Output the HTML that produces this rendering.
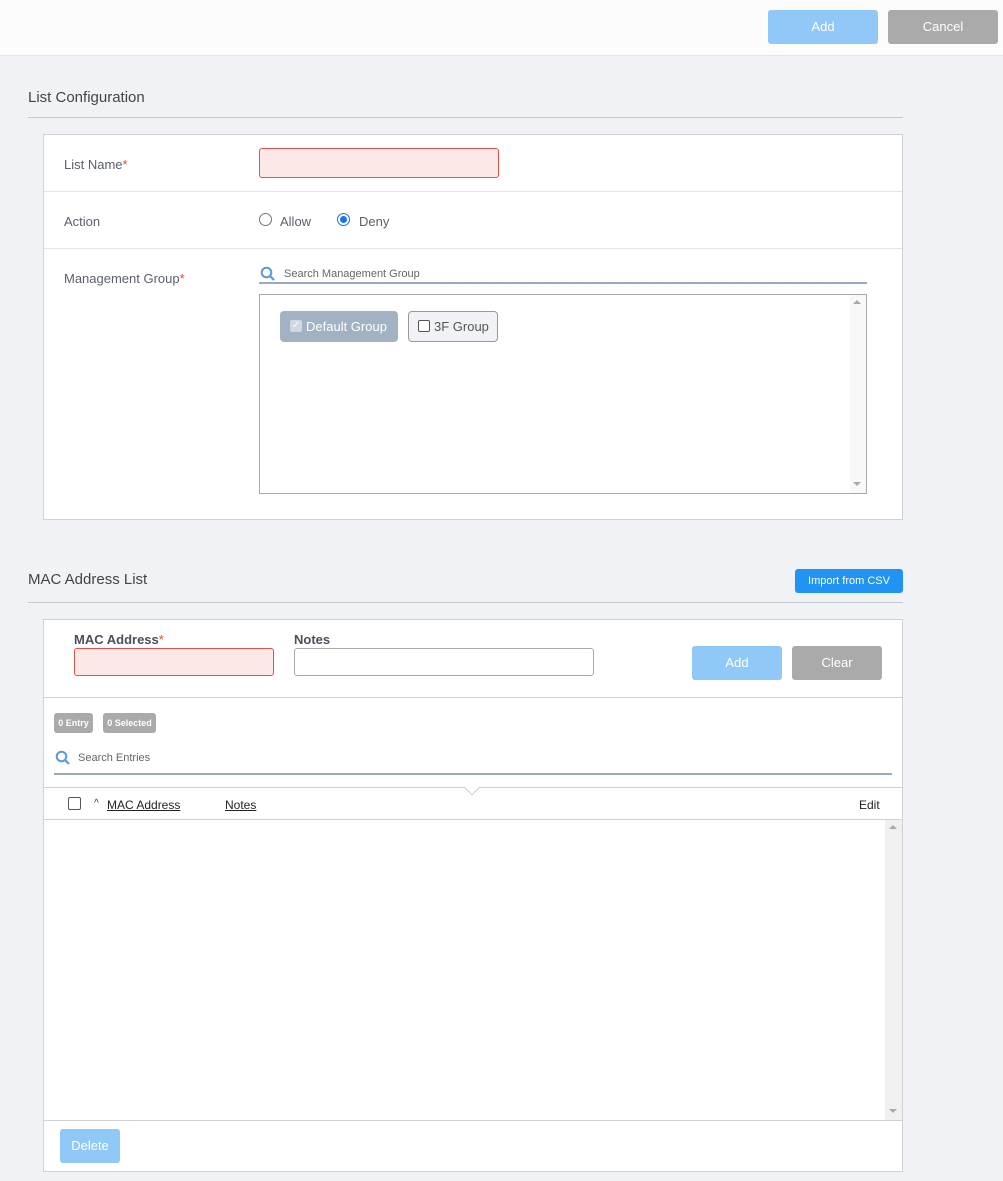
<!DOCTYPE html>
<html><head><style>
*{box-sizing:border-box;margin:0;padding:0}
body{width:1003px;height:1181px;background:#f1f2f6;font-family:"Liberation Sans",sans-serif;position:relative;overflow:hidden;color:#555}
.a{position:absolute}
.btn{position:absolute;color:#fff;font-size:13px;text-align:center;border-radius:3px}
.lbl{position:absolute;font-size:13px;color:#5a5f6b}
.req{color:#e0463a}
.line{position:absolute;height:1px;background:#e2e4e8}
</style></head><body>
<div class="a" style="left:0;top:0;width:1003px;height:56px;background:#fcfcfc;border-bottom:1px solid #e3e4e8"></div>
<div class="btn" style="left:768px;top:10px;width:110px;height:34px;line-height:34px;background:#90c8f7">Add</div>
<div class="btn" style="left:888px;top:10px;width:110px;height:34px;line-height:34px;background:#aaaaaa">Cancel</div>

<div class="a" style="left:28px;top:89px;font-size:15px;color:#444">List Configuration</div>
<div class="a" style="left:28px;top:117px;width:875px;height:1px;background:#c8c9cc"></div>

<div class="a" style="left:43px;top:134px;width:860px;height:386px;background:#fff;border:1px solid #d0d1d4"></div>
<div class="lbl" style="left:64px;top:157px">List Name<span class="req">*</span></div>
<div class="a" style="left:259px;top:148px;width:240px;height:30px;background:#fde8e8;border:1px solid #e0524a;border-radius:3px"></div>
<div class="line" style="left:44px;top:191px;width:858px"></div>
<div class="lbl" style="left:64px;top:214px">Action</div>
<div class="a" style="left:259px;top:213px;width:13px;height:13px;border:1px solid #777;border-radius:50%"></div>
<div class="lbl" style="left:280px;top:214px">Allow</div>
<div class="a" style="left:337px;top:213px;width:13px;height:13px;border:1px solid #1a73e8;border-radius:50%;background:#fff"><div class="a" style="left:2px;top:2px;width:7px;height:7px;border-radius:50%;background:#1a73e8"></div></div>
<div class="lbl" style="left:359px;top:214px">Deny</div>
<div class="line" style="left:44px;top:248px;width:858px"></div>
<div class="lbl" style="left:64px;top:271px">Management Group<span class="req">*</span></div>
<svg class="a" style="left:260px;top:266px" width="16" height="16" viewBox="0 0 16 16"><circle cx="6.5" cy="6.5" r="4.8" fill="none" stroke="#5b9bd5" stroke-width="2"/><path d="M10 10l4 4" stroke="#5b9bd5" stroke-width="2.2"/></svg>
<div class="a" style="left:284px;top:268px;font-size:11px;color:#666">Search Management Group</div>
<div class="a" style="left:259px;top:282px;width:608px;height:2px;background:#9aaabb"></div>
<div class="a" style="left:259px;top:294px;width:608px;height:200px;border:1px solid #aaa;background:#fff"></div>
<div class="a" style="left:850px;top:295px;width:16px;height:198px;background:#f8f8f8"></div>
<div class="a" style="left:853px;top:300px;border:4px solid transparent;border-bottom:4px solid #aaa;border-top:0"></div>
<div class="a" style="left:853px;top:482px;border:4px solid transparent;border-top:4px solid #aaa;border-bottom:0"></div>
<div class="a" style="left:280px;top:311px;width:118px;height:31px;background:#a1b3c3;border-radius:4px;color:#fff;font-size:13px;line-height:31px;padding-left:26px">Default Group</div>
<div class="a" style="left:290px;top:320px;width:12px;height:12px;background:#d0d8e0;border-radius:2px;color:#fff;font-size:10px;line-height:12px;text-align:center">✓</div>
<div class="a" style="left:408px;top:311px;width:90px;height:31px;background:#f1f2f6;border:1px solid #999;border-radius:4px;font-size:13px;line-height:29px;padding-left:25px;color:#555">3F Group</div>
<div class="a" style="left:418px;top:320px;width:12px;height:12px;border:1px solid #555;border-radius:2px;background:#fff"></div>

<div class="a" style="left:28px;top:571px;font-size:15px;color:#444">MAC Address List</div>
<div class="btn" style="left:795px;top:569px;width:108px;height:24px;line-height:24px;background:#2194f3;font-size:11px">Import from CSV</div>
<div class="a" style="left:28px;top:602px;width:875px;height:1px;background:#c8c9cc"></div>

<div class="a" style="left:43px;top:619px;width:860px;height:553px;background:#fff;border:1px solid #d0d1d4"></div>
<div class="a" style="left:74px;top:632px;font-size:13px;font-weight:bold;color:#4a4f5a">MAC Address<span class="req" style="font-weight:normal">*</span></div>
<div class="a" style="left:294px;top:632px;font-size:13px;font-weight:bold;color:#4a4f5a">Notes</div>
<div class="a" style="left:74px;top:648px;width:200px;height:28px;background:#fde8e8;border:1px solid #e0524a;border-radius:3px"></div>
<div class="a" style="left:294px;top:648px;width:300px;height:28px;border:1px solid #aaa;border-radius:3px"></div>
<div class="btn" style="left:692px;top:646px;width:90px;height:34px;line-height:34px;background:#90c8f7">Add</div>
<div class="btn" style="left:792px;top:646px;width:90px;height:34px;line-height:34px;background:#aaaaaa">Clear</div>
<div class="line" style="left:44px;top:697px;width:858px;background:#d0d1d4"></div>
<div class="btn" style="left:54px;top:713px;width:39px;height:20px;line-height:20px;background:#aaa;font-size:9px;font-weight:bold">0 Entry</div>
<div class="btn" style="left:103px;top:713px;width:53px;height:20px;line-height:20px;background:#aaa;font-size:9px;font-weight:bold">0 Selected</div>
<svg class="a" style="left:55px;top:750px" width="16" height="16" viewBox="0 0 16 16"><circle cx="6.5" cy="6.5" r="4.8" fill="none" stroke="#5b9bd5" stroke-width="2"/><path d="M10 10l4 4" stroke="#5b9bd5" stroke-width="2.2"/></svg>
<div class="a" style="left:78px;top:752px;font-size:11px;color:#666">Search Entries</div>
<div class="a" style="left:54px;top:773px;width:838px;height:2px;background:#9aaabb"></div>
<div class="line" style="left:44px;top:787px;width:858px;background:#d0d1d4"></div>
<div class="a" style="left:466px;top:781px;width:12px;height:12px;background:#fff;border-right:1px solid #d0d1d4;border-bottom:1px solid #d0d1d4;transform:rotate(45deg)"></div>
<div class="a" style="left:68px;top:797px;width:13px;height:13px;border:1px solid #555;border-radius:2px"></div>
<div class="a" style="left:94px;top:798px;font-size:10px;color:#333">^</div>
<div class="a" style="left:107px;top:798px;font-size:12px;color:#222;text-decoration:underline">MAC Address</div>
<div class="a" style="left:225px;top:798px;font-size:12px;color:#222;text-decoration:underline">Notes</div>
<div class="a" style="left:859px;top:798px;font-size:12px;color:#222">Edit</div>
<div class="line" style="left:44px;top:819px;width:858px;background:#d0d1d4"></div>
<div class="a" style="left:885px;top:820px;width:17px;height:300px;background:#f0f0f0"></div>
<div class="a" style="left:889px;top:825px;border:4px solid transparent;border-bottom:4px solid #aaa;border-top:0"></div>
<div class="a" style="left:889px;top:1109px;border:4px solid transparent;border-top:4px solid #aaa;border-bottom:0"></div>
<div class="line" style="left:44px;top:1120px;width:858px;background:#d0d1d4"></div>
<div class="btn" style="left:60px;top:1129px;width:60px;height:34px;line-height:34px;background:#90c8f7">Delete</div>
</body></html>
